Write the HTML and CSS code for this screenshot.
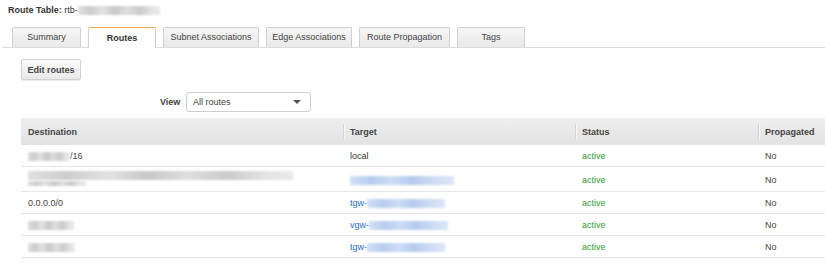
FILE: index.html
```html
<!DOCTYPE html>
<html lang="en">
<head>
    <meta charset="UTF-8">
    <title>Route Table</title>
    <link rel="stylesheet" href="styles.css">
</head>
<body>

    <!-- Cabecera de la tabla de rutas -->
    <div class="title">
        <b>Route Table:</b> rtb-<span class="blur gray w82"></span>
    </div>

    <!-- Pestañas -->
    <div class="tabs">
        <div class="tab w69">Summary</div>
        <div class="tab active w68">Routes</div>
        <div class="tab w96">Subnet Associations</div>
        <div class="tab w86">Edge Associations</div>
        <div class="tab w91">Route Propagation</div>
        <div class="tab w68">Tags</div>
    </div>

    <div class="toolbar">
        <button class="btn">Edit routes</button>
    </div>

    <div class="view-row">
        <label>View</label>
        <div class="select">
            <span>All routes</span>
            <span class="caret"></span>
        </div>
    </div>

    <table class="routes">
        <thead>
            <tr>
                <th class="c1">Destination</th>
                <th class="c2"><span class="sep"></span>Target</th>
                <th class="c3"><span class="sep"></span>Status</th>
                <th class="c4"><span class="sep"></span>Propagated</th>
            </tr>
        </thead>
        <tbody>
            <tr>
                <td><span class="blur gray w42"></span>/16</td>
                <td class="dark">local</td>
                <td class="ok">active</td>
                <td>No</td>
            </tr>
            <tr class="tall">
                <td>
                    <span class="blur gray w265"></span><br>
                    <span class="blur gray w58 half"></span>
                </td>
                <td><span class="blur blue w104"></span></td>
                <td class="ok">active</td>
                <td>No</td>
            </tr>
            <tr>
                <td>0.0.0.0/0</td>
                <td><a href="#">tgw-<span class="blur blue w78"></span></a></td>
                <td class="ok">active</td>
                <td>No</td>
            </tr>
            <tr>
                <td><span class="blur gray w46"></span></td>
                <td><a href="#">vgw-<span class="blur blue w79"></span></a></td>
                <td class="ok">active</td>
                <td>No</td>
            </tr>
            <tr>
                <td><span class="blur gray w47"></span></td>
                <td><a href="#">tgw-<span class="blur blue w78"></span></a></td>
                <td class="ok">active</td>
                <td>No</td>
            </tr>
        </tbody>
    </table>

</body>
</html>
```

FILE: styles.css
```css
body {
    font-family: "Liberation Sans", Arial, sans-serif;
    font-size: 9px;
    color: #444;
    margin: 0;
    padding: 0;
    background: #fff;
    overflow: hidden;
}

/* Título */
.title {
    padding: 4px 8px 0;
    height: 12px;
    line-height: 12px;
    color: #333;
}
.title b {
    color: #333;
}

/* Texto difuminado (datos ocultos) */
.blur {
    display: inline-block;
    height: 9px;
    vertical-align: -2px;
    filter: blur(0.8px);
}
.blur.gray {
    background: linear-gradient(90deg, #e0e0e0 0%, #cdcdcd 15%, #e2e2e2 30%, #c8c8c8 45%, #dedede 60%, #cbcbcb 75%, #e4e4e4 90%, #eaeaea 100%);
}
.blur.blue {
    background: linear-gradient(90deg, #d3e0f5 0%, #b6cdef 20%, #cfddf4 40%, #b4cbee 60%, #cddbf4 80%, #dce6f7 100%);
}
.blur.half {
    height: 5px;
    margin-top: 1px;
    vertical-align: top;
}
.w42 { width: 42px; }
.w46 { width: 46px; }
.w47 { width: 47px; }
.w58 { width: 58px; }
.w78 { width: 78px; }
.w79 { width: 79px; }
.w82 { width: 82px; }
.w104 { width: 104px; }
.w265 { width: 265px; }

/* Pestañas */
.tabs {
    display: flex;
    align-items: flex-end;
    gap: 7px;
    margin: 10px 0 0 2px;
    padding-left: 10px;
    border-bottom: 1px solid #dcdcdc;
    height: 21px;
}
.tab {
    height: 19px;
    line-height: 19px;
    text-align: center;
    border: 1px solid #d0d0d0;
    border-bottom: none;
    border-radius: 2px 2px 0 0;
    background: linear-gradient(#f6f6f6, #e9e9e9);
    color: #444;
}
.tab.w69 { width: 67px; }
.tab.w68 { width: 66px; }
.tab.w96 { width: 94px; }
.tab.w86 { width: 84px; }
.tab.w91 { width: 89px; }
.tab.active {
    height: 20px;
    line-height: 21px;
    background: #fff;
    border-top: 1px solid #eca73f;
    font-weight: bold;
    color: #333;
    margin-bottom: -1px;
}

/* Botón */
.toolbar {
    padding: 11px 0 0 21px;
}
.btn {
    font-family: inherit;
    font-size: 9px;
    font-weight: bold;
    color: #444;
    width: 60px;
    height: 21px;
    padding: 0;
    border: 1px solid #d2d2d2;
    border-radius: 2px;
    background: linear-gradient(#fafafa, #e9e9e9);
    box-shadow: 0 1px 1px rgba(0, 0, 0, 0.08);
}

/* Selector de vista */
.view-row {
    display: flex;
    align-items: center;
    padding: 12px 0 0 160px;
}
.view-row label {
    font-weight: bold;
    color: #444;
    width: 26px;
}
.select {
    display: flex;
    align-items: center;
    justify-content: space-between;
    width: 108px;
    height: 18px;
    padding: 0 9px 0 6px;
    border: 1px solid #cfcfcf;
    border-radius: 3px;
    background: #fff;
    color: #444;
}
.caret {
    width: 0;
    height: 0;
    border-left: 4px solid transparent;
    border-right: 4px solid transparent;
    border-top: 4px solid #555;
}

/* Tabla de rutas */
.routes {
    margin: 6px 0 0 21px;
    width: 804px;
    border-collapse: collapse;
    table-layout: fixed;
}
.routes th {
    position: relative;
    height: 27px;
    padding: 0 7px;
    text-align: left;
    font-weight: bold;
    color: #444;
    background: linear-gradient(#efefef, #e2e2e2);
}
.routes th .sep {
    position: absolute;
    left: 0;
    top: 6px;
    height: 15px;
    border-left: 1px solid #d3d3d3;
    border-right: 1px solid #f7f7f7;
}
.routes .c1 { width: 308px; }
.routes .c2 { width: 218px; }
.routes .c3 { width: 169px; }
.routes .c4 { width: 53px; }
.routes td {
    height: 21px;
    padding: 0 7px;
    border-bottom: 1px solid #e6e6e6;
    color: #444;
    white-space: nowrap;
    overflow: hidden;
}
.routes tr.tall td {
    height: 23px;
    line-height: 10px;
    padding-top: 1px;
}
.routes td.dark {
    color: #333;
}
.routes td.ok {
    color: #2ea02e;
}
.routes a {
    color: #1d6ec4;
    text-decoration: none;
}
```
